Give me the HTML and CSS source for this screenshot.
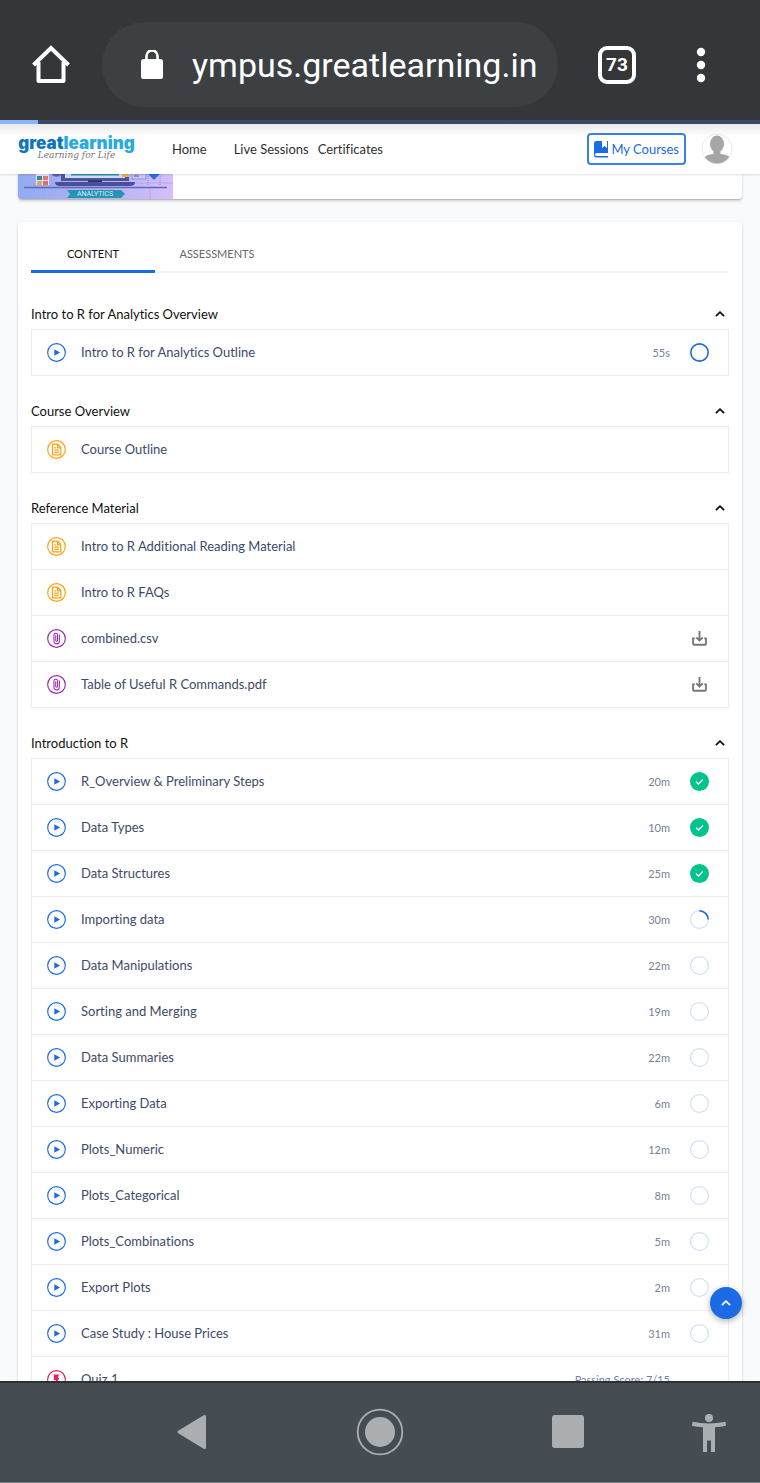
FILE: index.html
```html
<!DOCTYPE html>
<html lang="en">
<head>
<meta charset="utf-8">
<meta name="viewport" content="width=device-width, initial-scale=1">
<title>Great Learning</title>
<link rel="stylesheet" href="styles.css">
<script src="app.js" defer></script>
</head>
<body>
<svg class="sprite" aria-hidden="true">
  <symbol id="play" viewBox="0 0 20 20"><circle cx="10" cy="10" r="9.3" fill="none" stroke="currentColor" stroke-width="1.2"/><path d="M7.7 6.6v6.8l6.1-3.4z" fill="currentColor"/></symbol>
  <symbol id="doc" viewBox="0 0 20 20"><circle cx="10" cy="10" r="9.3" fill="none" stroke="currentColor" stroke-width="1.2"/><path d="M5.8 4.4h5.4L14.500 7.900v7.700H5.800zM11 4.600V8.200h3.400M7.800 8.200h1.600M7.800 10.600h4.800M7.800 13h4.800" fill="none" stroke="currentColor" stroke-width="1.300" stroke-linejoin="round"/></symbol>
  <symbol id="clip" viewBox="0 0 20 20"><circle cx="10" cy="10" r="9.3" fill="none" stroke="currentColor" stroke-width="1.2"/><path d="M13 6v6.800a2.800 2.800 0 0 1-5.700 0V6.400a1.900 1.900 0 0 1 3.800 0v5.900a1 1 0 0 1-1.900 0V7" fill="none" stroke="currentColor" stroke-width="1.100" stroke-linecap="round"/></symbol>
  <symbol id="quiz" viewBox="0 0 20 20"><circle cx="10" cy="10" r="9.3" fill="none" stroke="currentColor" stroke-width="1.2"/><path d="M7.200 4.800h5.400l-1.300 3.600h1.700L9.300 15.400v-4.900H7.200z" fill="currentColor"/></symbol>
  <symbol id="done" viewBox="0 0 20 20"><circle cx="10" cy="10" r="10" fill="#00c48c"/><path d="M6.400 10.200l2.500 2.400 4.700-4.600" fill="none" stroke="#fff" stroke-width="1.400"/></symbol>
  <symbol id="empty" viewBox="0 0 20 20"><circle cx="10" cy="10" r="9.4" fill="none" stroke="#cfdff9" stroke-width="1.200"/></symbol>
  <symbol id="open" viewBox="0 0 20 20"><circle cx="10" cy="10" r="9.1" fill="none" stroke="#1a6be5" stroke-width="1.700"/></symbol>
  <symbol id="partial" viewBox="0 0 20 20"><circle cx="10" cy="10" r="9.4" fill="none" stroke="#cfdff9" stroke-width="1.200"/><path d="M10 .9a9.1 9.1 0 0 1 9.100 9.100" fill="none" stroke="#1a6be5" stroke-width="1.700"/></symbol>
  <symbol id="download" viewBox="0 0 20 20"><path d="M3.200 9.500v5.900q0 1.200 1.200 1.200h11.200q1.200 0 1.200-1.200V9.500M2.400 9.800H5M15 9.800h2.600M10 2v10M6.600 8.800L10 12.200l3.400-3.400" fill="none" stroke="#757575" stroke-width="1.900"/></symbol>
  <symbol id="up" viewBox="0 0 10 6"><path d="M.9 5.1L5 1.200l4.100 3.900" fill="none" stroke="currentColor" stroke-width="1.800"/></symbol>
</svg>

<header class="browser">
  <button class="plain" aria-label="Home page"><svg width="40" height="40" viewBox="0 0 40 40" fill="none" stroke="#fff" stroke-width="4" stroke-linejoin="round"><path d="M2.500 20L20 3 37.500 20" stroke-linejoin="miter"/><path d="M7.500 17V36h25V17"/></svg></button>
  <div class="address">
    <svg width="24" height="30" viewBox="0 0 24 30"><rect x="1" y="9" width="22" height="20" rx="2.500" fill="#fff"/><path d="M6.500 10V6a5.500 5.500 0 0 1 11 0v4" fill="none" stroke="#fff" stroke-width="2.600"/></svg>
    <span>ympus.greatlearning.in</span>
  </div>
  <button class="plain tabcount" aria-label="73 open tabs">73</button>
  <button class="plain dots" aria-label="More"><svg width="10" height="36" viewBox="0 0 10 36" fill="#fff"><circle cx="5" cy="5" r="4.200"/><circle cx="5" cy="18" r="4.200"/><circle cx="5" cy="31" r="4.200"/></svg></button>
</header>
<div class="loading"><div class="loaded"></div></div>

<div class="view">
  <header class="site">
    <a class="brand" href="#"><span class="word">great<span class="light">learning</span></span><span class="motto">Learning for Life</span></a>
    <nav class="links"><a class="home" href="#">Home</a><a href="#">Live Sessions</a><a href="#">Certificates</a></nav>
    <a class="courses" href="#"><svg width="15" height="17" viewBox="0 0 15 17" fill="#1a6be5"><path d="M2.500 0H8v7l2.500-2L13 7V0h1v12H2.500a1 1 0 0 0 0 3H14v1.500H2.500A2.500 2.500 0 0 1 0 14V2.500A2.500 2.500 0 0 1 2.500 0z"/></svg>My Courses</a>
    <button class="plain" aria-label="Profile"><svg width="32" height="32" viewBox="0 0 32 32"><defs><clipPath id="face"><circle cx="16" cy="16" r="14.500"/></clipPath></defs><circle cx="16" cy="16" r="15" fill="#fff" stroke="#e8e8e8"/><g fill="#a6a6a6" clip-path="url(#face)"><ellipse cx="16" cy="11" rx="7" ry="8.500"/><path d="M12.500 17h7v4c5 .5 9 2 11 5v6H2v-6c1.500-3 5.500-4.500 10.500-5z"/></g></svg></button>
  </header>

  <main>
    <section class="card banner">
      <svg width="155" height="25" viewBox="0 0 155 25">
        <defs><linearGradient id="sky"><stop offset="0" stop-color="#91abf1"/><stop offset=".55" stop-color="#b3b2f5"/><stop offset="1" stop-color="#d6bff9"/></linearGradient></defs>
        <path d="M0 0h155v25H0z" fill="url(#sky)"/>
        <path d="M0 9h155M25 13v12M75 13v4M132 13v12" stroke="#a3a5e6" stroke-width=".7"/>
        <path d="M18 0h13v11H18z" fill="#e8e4f6"/><path d="M19 2h5v4h-5z" fill="#298ba8"/><path d="M25 2h5v4h-5z" fill="#d77a72"/><path d="M19 7h5v4h-5z" fill="#d2b05a"/><path d="M25 7h5v4h-5z" fill="#e26b62"/>
        <path d="M34 0h10q-4 5-10 1z" fill="#5361a8"/>
        <path d="M43 0h68v7H43z" fill="#4b559f"/><path d="M47 0h60v4H47z" fill="#d7dbfb"/><path d="M53 0h48v1.500H53z" fill="#2597b4"/><path d="M104 0h7v3h-7z" fill="#dfb64e"/>
        <path d="M37 8h80q0 4-5 4H42q-5 0-5-4z" fill="#4a4f9b"/><path d="M70 6h14v2H70z" fill="#303777"/>
        <path d="M114 0h14v5h-14z" fill="#cac8f8" stroke="#6d72bd" stroke-width=".6"/><path d="M116 2h5" stroke="#4c579f"/>
        <path d="M130 0h12l-6 6z" fill="#286fe2"/><path d="M130 0v11M142 0v11" stroke="#818bd2" stroke-dasharray="1 1"/>
        <path d="M6 13.500h143" stroke="#6269b1" stroke-width="1.300"/>
        <path d="M49 16h54l4 4-4 4H49l3-4z" fill="#2694b5"/>
        <text class="label" x="77" y="22" text-anchor="middle">ANALYTICS</text>
      </svg>
    </section>

    <section class="card content">
      <div class="tabs" role="tablist"><button class="tab on" role="tab" aria-selected="true">CONTENT</button><button class="tab" role="tab" aria-selected="false">ASSESSMENTS</button></div>
      <div id="modules"></div>
    </section>
  </main>
  <button class="top" aria-label="Back to top"><svg width="10" height="6"><use href="#up"/></svg></button>
</div>

<nav class="system">
  <button class="plain" aria-label="Back"><svg width="32" height="36" viewBox="0 0 32 36"><path d="M28.500 2.500v31L3 18z" fill="#abafb2" stroke="#abafb2" stroke-width="3" stroke-linejoin="round"/></svg></button>
  <button class="plain" aria-label="Home"><svg width="48" height="48" viewBox="0 0 48 48"><circle cx="24" cy="24" r="22.300" fill="none" stroke="#abafb2" stroke-width="1.800"/><circle cx="24" cy="24" r="15" fill="#abafb2"/></svg></button>
  <button class="plain" aria-label="Recent apps"><svg width="32" height="33" viewBox="0 0 32 33"><rect width="32" height="33" rx="3" fill="#abafb2"/></svg></button>
  <button class="plain access" aria-label="Accessibility"><svg width="34" height="38" viewBox="0 0 34 38" fill="#abafb2"><circle cx="17" cy="4" r="4"/><path d="M.5 7.700Q17 11.300 33.500 7.700l.5 4q-5.500 1.200-11 1.500V38h-4V26.500h-4V38h-4V13.200Q5.500 12.900 0 11.700z"/></svg></button>
</nav>
</body>
</html>
```
FILE: app.js
```js
const modules = [
  ["Intro to R for Analytics Overview", [["play", "Intro to R for Analytics Outline", "55s", "open"]]],
  ["Course Overview", [["doc", "Course Outline"]]],
  ["Reference Material", [
    ["doc", "Intro to R Additional Reading Material"],
    ["doc", "Intro to R FAQs"],
    ["clip", "combined.csv", "", "download"],
    ["clip", "Table of Useful R Commands.pdf", "", "download"]
  ]],
  ["Introduction to R", [
    ["play", "R_Overview & Preliminary Steps", "20m", "done"],
    ["play", "Data Types", "10m", "done"],
    ["play", "Data Structures", "25m", "done"],
    ["play", "Importing data", "30m", "partial"],
    ["play", "Data Manipulations", "22m", "empty"],
    ["play", "Sorting and Merging", "19m", "empty"],
    ["play", "Data Summaries", "22m", "empty"],
    ["play", "Exporting Data", "6m", "empty"],
    ["play", "Plots_Numeric", "12m", "empty"],
    ["play", "Plots_Categorical", "8m", "empty"],
    ["play", "Plots_Combinations", "5m", "empty"],
    ["play", "Export Plots", "2m", "empty"],
    ["play", "Case Study : House Prices", "31m", "empty"],
    ["quiz", "Quiz 1", "Passing Score: 7/15", "none"]
  ]]
];

const icon = (name, cls) => `<svg class="icon ${cls}" viewBox="0 0 20 20"><use href="#${name}"/></svg>`;
const esc = s => s.replace("&", "&amp;");

document.getElementById("modules").innerHTML = modules.map(([title, items]) => `
  <section class="module">
    <h2><button class="plain heading" aria-expanded="true">${title}<svg width="10" height="6"><use href="#up"/></svg></button></h2>
    <ul class="items">${items.map(([kind, name, note = "", state]) => `
      <li class="item">${icon(kind, kind)}<a class="name" href="#">${esc(name)}</a><span class="note">${note}</span>${state ? icon(state, "state") : ""}</li>`).join("")}
    </ul>
  </section>`).join("");
```
FILE: styles.css
```css
* { box-sizing: border-box; }
body {
  margin: 0;
  height: 100vh;
  display: flex;
  flex-direction: column;
  overflow: hidden;
  background: #f9fafc;
  font-family: Lato, "Open Sans", sans-serif;
  font-size: 13px;
  font-variant-ligatures: none;
}
a { color: inherit; text-decoration: none; }
svg { display: block; flex: none; }
button { font: inherit; color: inherit; border: 0; padding: 0; background: none; }
.plain { display: flex; align-items: center; justify-content: center; }
.sprite { position: absolute; width: 0; height: 0; }

.browser {
  flex: none;
  display: flex;
  align-items: center;
  padding: 22px 54px 13px 31px;
  background: #35363a;
  color: #fff;
}
.address {
  flex: 1;
  display: flex;
  align-items: center;
  gap: 28px;
  height: 85px;
  margin: 0 40px 0 31px;
  padding-left: 38px;
  border-radius: 43px;
  background: #3c4043;
  font: 34px Roboto, sans-serif;
  white-space: nowrap;
}
.tabcount {
  width: 38px;
  height: 38px;
  border: 4px solid #fff;
  border-radius: 9px;
  font: bold 19px Roboto, sans-serif;
}
.dots { margin-left: 60px; }
.loading { flex: none; height: 4px; background: #394966; }
.loaded { width: 5%; height: 4px; background: #8ab4f8; }

.view { position: relative; flex: 1; min-height: 0; overflow: hidden; }
.site {
  display: flex;
  align-items: center;
  height: 50px;
  padding: 0 27px 0 18px;
  background: linear-gradient(#e9e9e9, #fff 12px);
  box-shadow: 0 1px 2px #00000020;
  position: relative;
  color: #303030;
}
.brand { display: flex; flex-direction: column; align-items: center; width: 117px; padding-bottom: 4px; }
.word { font: 900 17px/16px Inter, sans-serif; color: #1075bc; }
.light { color: #28a9e1; }
.motto { font: italic 9px/9px "DejaVu Serif", serif; color: #777; }
.links { display: flex; gap: 9px; flex: 1; margin-left: 37px; }
.home { margin-right: 18px; }
.courses {
  display: flex;
  align-items: center;
  gap: 2px;
  height: 32px;
  padding: 0 5px;
  border: 2px solid #3a80ea;
  border-radius: 4px;
  margin-right: 15px;
  color: #1a6be5;
}
main { padding: 0 18px; }
.card { background: #fff; box-shadow: 0 1px 3px #00000030; }
.banner { border-radius: 0 0 4px 4px; overflow: hidden; border-bottom: 1px solid #bbb; height: 26px; }
.label { font: 7px Roboto, sans-serif; fill: #d5edf6; }
.content { margin-top: 22px; padding: 12px 13px 0; border-radius: 4px; }
.tabs { display: flex; height: 39px; border-bottom: 2px solid #f3f3f5; margin-bottom: 26px; }
.tab { width: 124px; height: 39px; padding-top: 2px; font-size: 11px; color: #666; border-bottom: 3px solid transparent; }
.on { color: #111; border-color: #1a6be5; border-radius: 2px 2px 0 0; }

.module { margin-bottom: 20px; }
h2 { margin: 0; font-size: 13px; font-weight: 400; color: #111; }
.heading { width: 100%; height: 30px; justify-content: space-between; padding-right: 4px; }
.items { margin: 0; padding: 0; list-style: none; border: 1px solid #ededf0; border-top-width: 0; }
.item {
  display: flex;
  align-items: center;
  height: 46px;
  padding: 0 19px 1px 15px;
  border-top: 1px solid #ededf0;
}
.icon { width: 19px; height: 19px; }
.name { flex: 1; margin-left: 15px; color: #3c4a69; }
.note { font-size: 11px; color: #76819a; }
.state { margin-left: 20px; }
.play { color: #1a6be5; }
.doc { color: #ff9f0f; }
.clip { color: #9c27b0; }
.quiz { color: #e91e63; }
.top {
  position: absolute;
  right: 18px;
  bottom: 62px;
  width: 32px;
  height: 32px;
  border-radius: 50%;
  display: flex;
  align-items: center;
  justify-content: center;
  background: #1a6be5;
  color: #fff;
  box-shadow: 0 2px 6px #00000050;
}
.system {
  flex: none;
  display: grid;
  grid-template-columns: 1fr 1fr 1fr;
  align-items: center;
  justify-items: center;
  position: relative;
  height: 102px;
  padding: 0 98px 2px;
  border-top: 2px solid #2b3235;
  border-bottom: 1px solid #777d80;
  background: #464d52;
}
.access { position: absolute; right: 34px; }
```
